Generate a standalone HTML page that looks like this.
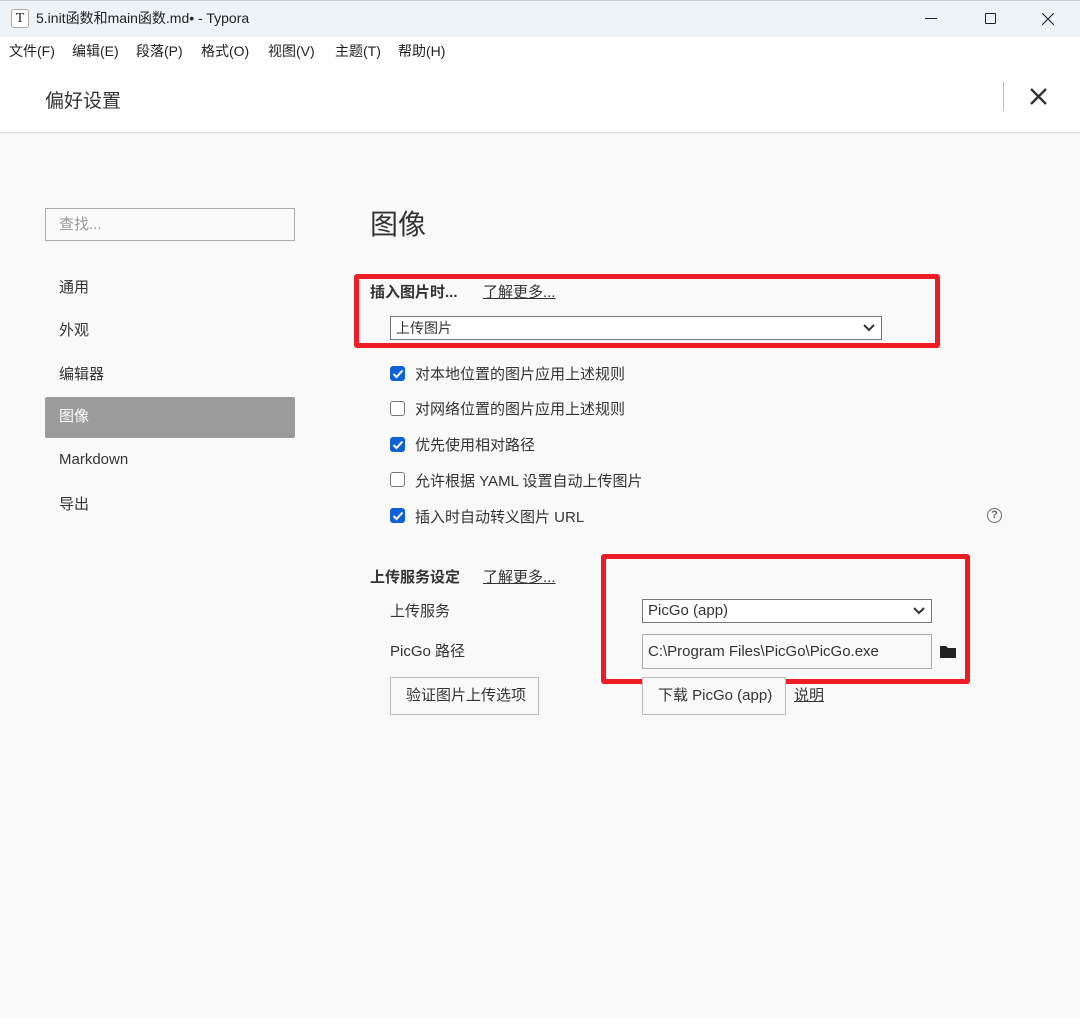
<!DOCTYPE html>
<html><head><meta charset="utf-8"><style>
*{margin:0;padding:0;box-sizing:border-box}
body{width:1080px;height:1018px;background:#f9f9f9;font-family:"Liberation Sans","Noto Sans CJK SC",sans-serif;color:#333;position:relative;overflow:hidden;font-size:15px}
.a{position:absolute;white-space:nowrap}
.t{margin-top:-3px}
.title{left:0;top:0;width:1080px;height:37px;background:#eef3f8;border-top:1px solid #ccc}
.menu{left:0;top:37px;width:1080px;height:96px;background:#fff;border-bottom:1px solid #ddd}
.cb{width:15px;height:15px;border-radius:3px}
.on{background:#0f62d6}
.off{border:1px solid #777;background:#fff}
.sel{background:#fff;border:1px solid #777;height:24px}
.btn{border:1px solid #bbb;background:#f9f9f9;height:38px}
.m{top:41px;font-size:14px;color:#222}
</style></head><body>
<div class="a title"></div>
<div class="a" style="left:11px;top:9px;width:18px;height:19px;border:1px solid #aaa;border-radius:3px;background:#fff;font-family:'Liberation Serif',serif;font-size:14px;text-align:center;line-height:17px;color:#222">T</div>
<div class="a" style="left:36px;top:8px;font-size:14px;color:#222">5.init函数和main函数.md• - Typora</div>
<div class="a" style="left:925px;top:18px;width:12px;height:1px;background:#222"></div>
<div class="a" style="left:985px;top:13px;width:11px;height:11px;border:1px solid #222;border-radius:1px"></div>
<svg class="a" style="left:1042px;top:13px" width="12" height="12"><path d="M0 0L12 12M12 0L0 12" stroke="#222" stroke-width="1.1"/></svg>
<div class="a menu"></div>
<div class="a m" style="left:9px">文件(F)</div>
<div class="a m" style="left:72px">编辑(E)</div>
<div class="a m" style="left:136px">段落(P)</div>
<div class="a m" style="left:201px">格式(O)</div>
<div class="a m" style="left:268px">视图(V)</div>
<div class="a m" style="left:335px">主题(T)</div>
<div class="a m" style="left:398px">帮助(H)</div>
<div class="a" style="left:45px;top:86px;font-size:19px;color:#333">偏好设置</div>
<div class="a" style="left:1003px;top:82px;width:1px;height:29px;background:#bbb"></div>
<svg class="a" style="left:1030px;top:88px" width="17" height="17"><path d="M1 1L16 16M16 1L1 16" stroke="#333" stroke-width="2.4"/></svg>

<div class="a" style="left:45px;top:208px;width:250px;height:33px;border:1px solid #aaa;background:#fafafa"></div>
<div class="a t" style="left:59px;top:216px;color:#999">查找...</div>
<div class="a t" style="left:59px;top:279px">通用</div>
<div class="a t" style="left:59px;top:322px">外观</div>
<div class="a t" style="left:59px;top:366px">编辑器</div>
<div class="a" style="left:45px;top:397px;width:250px;height:41px;background:#9b9b9b;border-radius:2px"></div>
<div class="a t" style="left:59px;top:408px;color:#fff">图像</div>
<div class="a t" style="left:59px;top:454px">Markdown</div>
<div class="a t" style="left:59px;top:496px">导出</div>

<div class="a t" style="left:370px;top:206px;font-size:28px;color:#333">图像</div>
<div class="a" style="left:354px;top:274px;width:586px;height:74px;border:5px solid #ee1c25;border-radius:3px"></div>
<div class="a t" style="left:370px;top:284px;font-weight:bold">插入图片时...</div>
<div class="a t" style="left:483px;top:284px;text-decoration:underline">了解更多...</div>
<div class="a sel" style="left:390px;top:316px;width:492px"></div>
<div class="a" style="left:396px;top:318px;font-size:14px">上传图片</div>
<svg class="a" style="left:863px;top:324px" width="12" height="8"><path d="M1 1L6 6L11 1" stroke="#333" stroke-width="2" fill="none"/></svg>

<div class="a cb on" style="left:390px;top:366px"></div>
<div class="a t" style="left:415px;top:366px">对本地位置的图片应用上述规则</div>
<div class="a cb off" style="left:390px;top:401px"></div>
<div class="a t" style="left:415px;top:401px">对网络位置的图片应用上述规则</div>
<div class="a cb on" style="left:390px;top:437px"></div>
<div class="a t" style="left:415px;top:437px">优先使用相对路径</div>
<div class="a cb off" style="left:390px;top:472px"></div>
<div class="a t" style="left:415px;top:473px">允许根据 YAML 设置自动上传图片</div>
<div class="a cb on" style="left:390px;top:508px"></div>
<div class="a t" style="left:415px;top:509px">插入时自动转义图片 URL</div>
<div class="a" style="left:987px;top:508px;width:15px;height:15px;border:1.5px solid #666;border-radius:50%;font-size:11px;line-height:12px;text-align:center;color:#666;font-weight:bold">?</div>
<svg class="a" style="left:392px;top:369px" width="12" height="10"><path d="M1.5 5L4.5 8L10.5 1.5" stroke="#fff" stroke-width="2" fill="none"/></svg>
<svg class="a" style="left:392px;top:440px" width="12" height="10"><path d="M1.5 5L4.5 8L10.5 1.5" stroke="#fff" stroke-width="2" fill="none"/></svg>
<svg class="a" style="left:392px;top:511px" width="12" height="10"><path d="M1.5 5L4.5 8L10.5 1.5" stroke="#fff" stroke-width="2" fill="none"/></svg>

<div class="a t" style="left:370px;top:569px;font-weight:bold">上传服务设定</div>
<div class="a t" style="left:483px;top:569px;text-decoration:underline">了解更多...</div>
<div class="a" style="left:601px;top:554px;width:369px;height:130px;border:5px solid #ee1c25;border-radius:3px"></div>
<div class="a t" style="left:390px;top:603px">上传服务</div>
<div class="a sel" style="left:642px;top:599px;width:290px"></div>
<div class="a" style="left:648px;top:602px;font-size:15px">PicGo (app)</div>
<svg class="a" style="left:913px;top:607px" width="12" height="8"><path d="M1 1L6 6L11 1" stroke="#333" stroke-width="2" fill="none"/></svg>
<div class="a t" style="left:390px;top:643px">PicGo 路径</div>
<div class="a" style="left:642px;top:634px;width:290px;height:35px;border:1px solid #aaa;background:#f9f9f9"></div>
<div class="a" style="left:648px;top:643px">C:\Program Files\PicGo\PicGo.exe</div>
<svg class="a" style="left:940px;top:645px" width="16" height="13"><path d="M0 1H6L8 3H16V13H0Z" fill="#222"/></svg>
<div class="a btn" style="left:390px;top:677px;width:149px"></div>
<div class="a t" style="left:406px;top:687px">验证图片上传选项</div>
<div class="a btn" style="left:642px;top:677px;width:144px"></div>
<div class="a t" style="left:658px;top:687px">下载 PicGo (app)</div>
<div class="a t" style="left:794px;top:687px;text-decoration:underline">说明</div>
</body></html>
